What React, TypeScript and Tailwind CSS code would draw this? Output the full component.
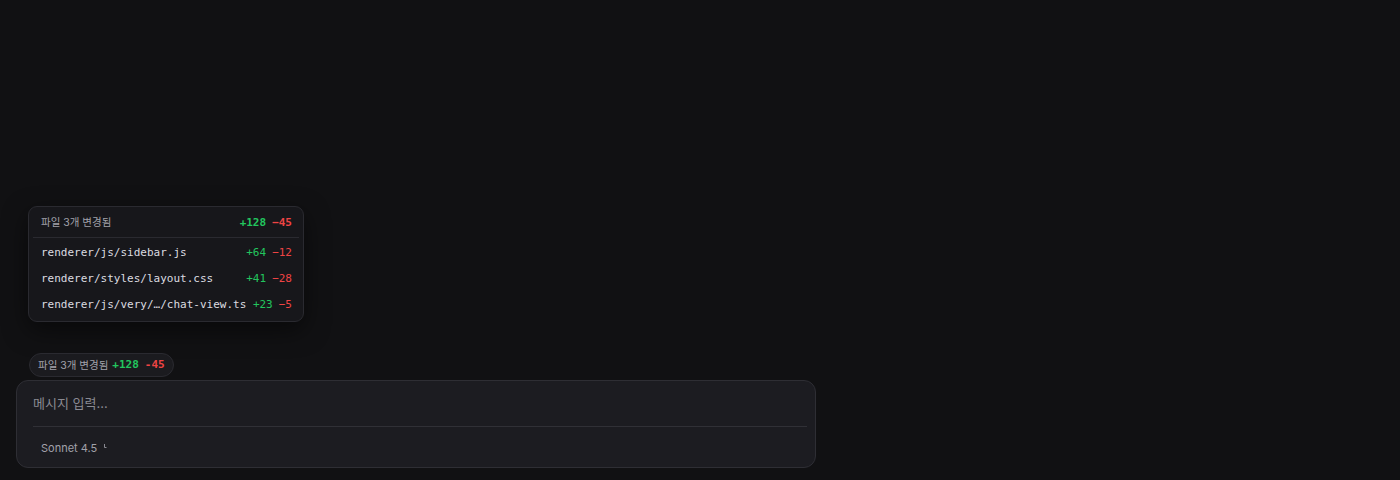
import React from "react";

const mono = { fontFamily: '"DejaVu Sans Mono", "Liberation Mono", monospace' };
const sans = { fontFamily: 'Inter, "Noto Sans CJK KR", "Noto Sans", sans-serif' };

const files = [
  { path: "renderer/js/sidebar.js", add: "+64", del: "−12" },
  { path: "renderer/styles/layout.css", add: "+41", del: "−28" },
  { path: "renderer/js/very/…/chat-view.ts", add: "+23", del: "−5" },
];

export default function App() {
  return (
    <div className="h-[480px] w-[1400px] bg-[#111113] flex flex-col justify-end px-4 pb-[12px]" style={sans}>
      <div className="ml-3 w-[276px] rounded-[9px] border border-[#2a2a30] bg-[#17171b] shadow-[0_8px_24px_rgba(0,0,0,0.5)] pb-[3px]">
        <div className="h-[30px] pt-[2px] flex items-center justify-between pl-3 pr-[11px]">
          <span className="text-[10.5px] text-[#a1a1aa]">파일 3개 변경됨</span>
          <span className="text-[11px] font-bold flex gap-[6px]" style={mono}>
            <span className="text-[#22c55e]">+128</span>
            <span className="text-[#ef4444]">−45</span>
          </span>
        </div>
        <div className="mx-1 h-px bg-[#2a2a30]" />
        <div className="pt-[2px]">
          {files.map((f) => (
            <div key={f.path} className="h-[26px] flex items-center justify-between pl-3 pr-[11px] text-[11px]" style={mono}>
              <span className="text-[#dcdce0]">{f.path}</span>
              <span className="flex gap-[6px]">
                <span className="text-[#22c55e]">{f.add}</span>
                <span className="text-[#ef4444]">{f.del}</span>
              </span>
            </div>
          ))}
        </div>
      </div>
      <div className="mt-[31px] ml-[13px] self-start h-6 flex items-center gap-1 rounded-full border border-[#2a2a30] bg-[#1b1b1f] pl-2 pr-2">
        <span className="text-[10.5px] text-[#a1a1aa] pt-px">파일 3개 변경됨</span>
        <span className="text-[11px] font-bold flex gap-[6px]" style={mono}>
          <span className="text-[#22c55e]">+128</span>
          <span className="text-[#ef4444]">-45</span>
        </span>
      </div>
      <div className="mt-[3px] w-[800px] h-[88px] rounded-xl border border-[#2e2e34] bg-[#1c1c21] flex flex-col">
        <div className="h-[45px] flex items-center px-4 text-[13px] text-[#8a8a92]">메시지 입력...</div>
        <div className="ml-4 mr-2 h-px bg-[#303036]" />
        <div className="flex-1 flex items-center pl-6 pt-[2px] gap-[7px]">
          <span className="text-[11px] text-[#a1a1aa]">Sonnet 4.5</span>
          <svg width="4" height="5" viewBox="0 0 4 5" className="-mt-[4px]">
            <path d="M0.5 0v3.5h2" stroke="#8a8a92" strokeWidth="1" fill="none" />
          </svg>
        </div>
      </div>
    </div>
  );
}
